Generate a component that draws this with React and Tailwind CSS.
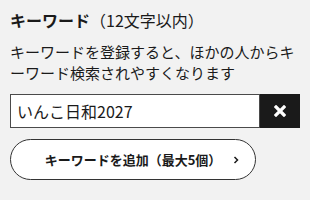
export default function App() {
  return (
    <div
      className="w-[310px] h-[200px] bg-[#f2f2f2] text-[#1a1a1a] px-[10px] pt-[8px]"
      style={{ fontFamily: '"Noto Sans CJK JP", "Noto Sans", sans-serif' }}
    >
      <div className="text-[16px] leading-[24px] flex">
        <span className="font-bold">キーワード</span>
        <span>（12文字以内）</span>
      </div>
      <p className="mt-[9px] text-[15px] leading-[21px]">
        キーワードを登録すると、ほかの人からキーワード検索されやすくなります
      </p>
      <div className="mt-[11px] flex h-[34px] w-[290px]">
        <div className="flex-1 bg-white border border-[#4a4a4a] flex items-center pl-[6px] text-[16px]">
          いんこ日和2027
        </div>
        <div className="w-[40px] bg-[#1a1a1a] flex items-center justify-center">
          <svg width="12" height="12" viewBox="0 0 12 12">
            <path d="M2 2 L10 10 M10 2 L2 10" stroke="white" strokeWidth="3.2" strokeLinecap="square" />
          </svg>
        </div>
      </div>
      <button className="mt-[11px] w-[246px] h-[41px] rounded-full border border-[#333] bg-white relative flex items-center justify-center text-[13px] font-bold">
        <span>キーワードを追加（最大5個）</span>
        <svg className="absolute right-[16px] top-1/2 -translate-y-1/2" width="6" height="9" viewBox="0 0 6 9">
          <path d="M1.5 1.5 L4.5 4.5 L1.5 7.5" stroke="#1a1a1a" strokeWidth="1.5" fill="none" />
        </svg>
      </button>
    </div>
  );
}
